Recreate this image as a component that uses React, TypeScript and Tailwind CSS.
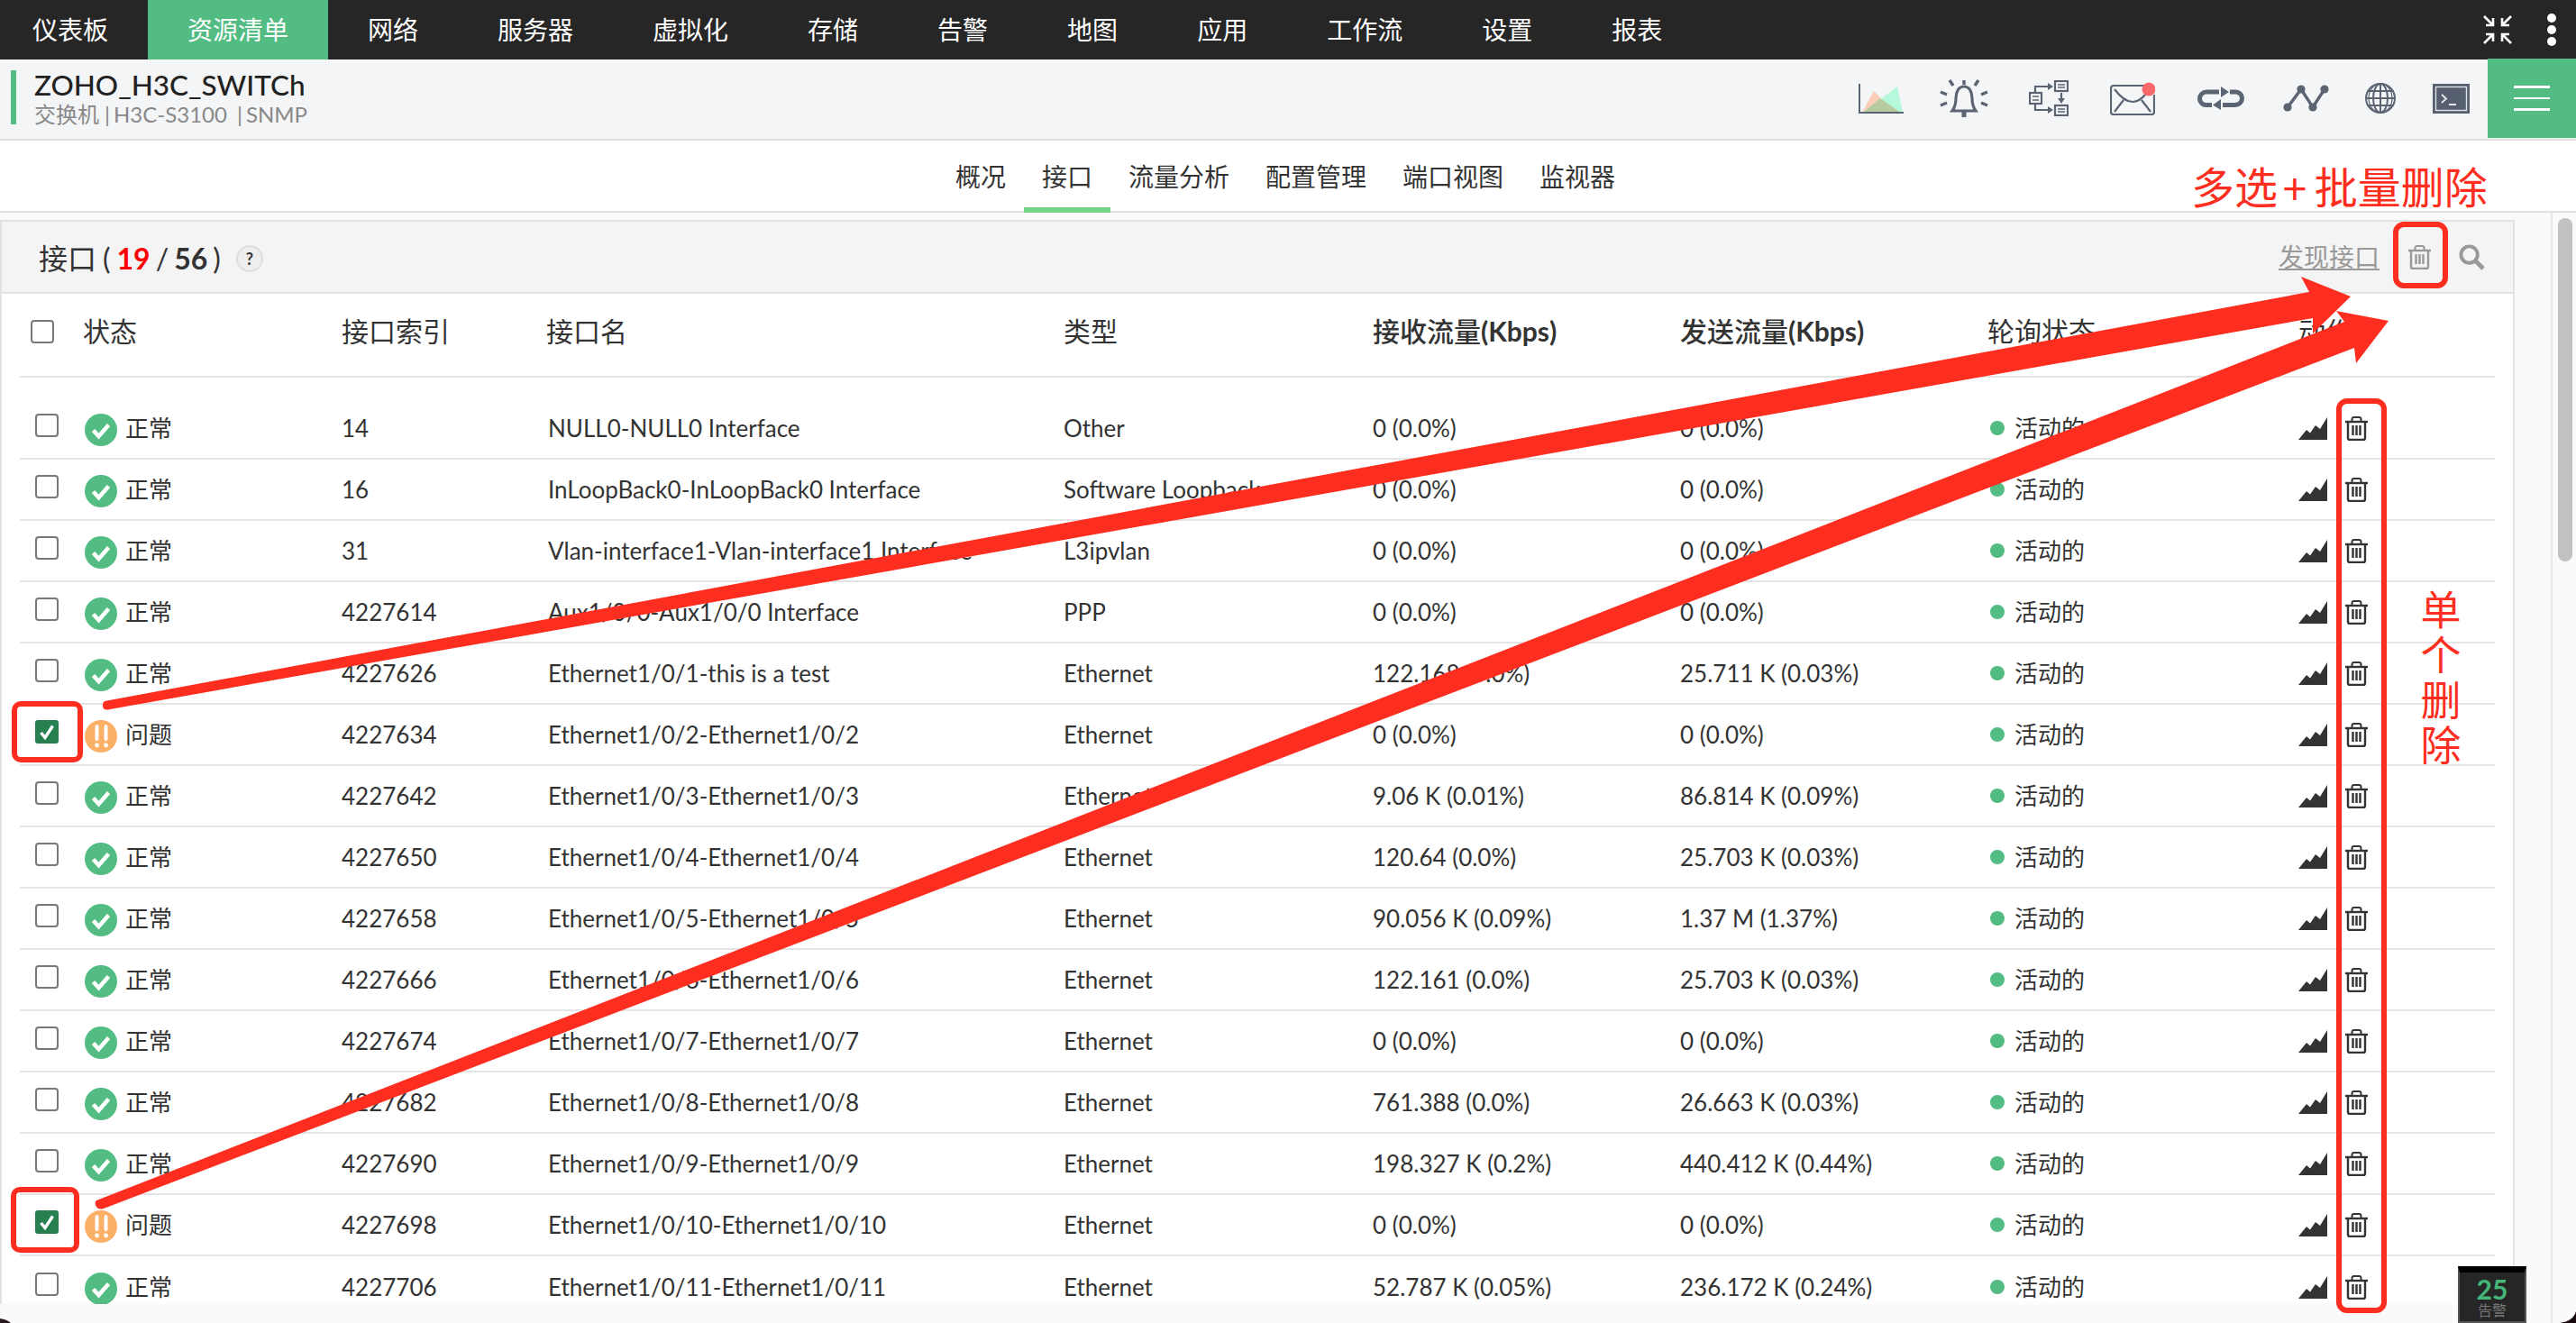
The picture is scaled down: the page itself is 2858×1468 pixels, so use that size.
const navItems = ['仪表板', '资源清单', '网络', '服务器', '虚拟化', '存储', '告警', '地图', '应用', '工作流', '设置', '报表']
const tabs = ['概况', '接口', '流量分析', '配置管理', '端口视图', '监视器']
const columns = 'grid grid-cols-[72px_285px_229px_572px_343px_341px_341px_345px_218px] items-center'

const rows = [
  ['14', 'NULL0-NULL0 Interface', 'Other', '0 (0.0%)', '0 (0.0%)'],
  ['16', 'InLoopBack0-InLoopBack0 Interface', 'Software Loopback', '0 (0.0%)', '0 (0.0%)'],
  ['31', 'Vlan-interface1-Vlan-interface1 Interface', 'L3ipvlan', '0 (0.0%)', '0 (0.0%)'],
  ['4227614', 'Aux1/0/0-Aux1/0/0 Interface', 'PPP', '0 (0.0%)', '0 (0.0%)'],
  ['4227626', 'Ethernet1/0/1-this is a test', 'Ethernet', '122.168 (0.0%)', '25.711 K (0.03%)'],
  ['4227634', 'Ethernet1/0/2-Ethernet1/0/2', 'Ethernet', '0 (0.0%)', '0 (0.0%)', 'bad'],
  ['4227642', 'Ethernet1/0/3-Ethernet1/0/3', 'Ethernet', '9.06 K (0.01%)', '86.814 K (0.09%)'],
  ['4227650', 'Ethernet1/0/4-Ethernet1/0/4', 'Ethernet', '120.64 (0.0%)', '25.703 K (0.03%)'],
  ['4227658', 'Ethernet1/0/5-Ethernet1/0/5', 'Ethernet', '90.056 K (0.09%)', '1.37 M (1.37%)'],
  ['4227666', 'Ethernet1/0/6-Ethernet1/0/6', 'Ethernet', '122.161 (0.0%)', '25.703 K (0.03%)'],
  ['4227674', 'Ethernet1/0/7-Ethernet1/0/7', 'Ethernet', '0 (0.0%)', '0 (0.0%)'],
  ['4227682', 'Ethernet1/0/8-Ethernet1/0/8', 'Ethernet', '761.388 (0.0%)', '26.663 K (0.03%)'],
  ['4227690', 'Ethernet1/0/9-Ethernet1/0/9', 'Ethernet', '198.327 K (0.2%)', '440.412 K (0.44%)'],
  ['4227698', 'Ethernet1/0/10-Ethernet1/0/10', 'Ethernet', '0 (0.0%)', '0 (0.0%)', 'bad'],
  ['4227706', 'Ethernet1/0/11-Ethernet1/0/11', 'Ethernet', '52.787 K (0.05%)', '236.172 K (0.24%)'],
]

function TrashIcon({ color = '#333333', className = '' }: { color?: string; className?: string }) {
  return (
    <svg viewBox="0 0 25 27" fill="none" stroke={color} className={className}>
      <path d="M0 6h25" strokeWidth="2.4" />
      <path d="M7.5 5V3.2A2.2 2.2 0 0 1 9.7 1h5.6a2.2 2.2 0 0 1 2.2 2.2V5" strokeWidth="2" />
      <path d="M3 6v18a2 2 0 0 0 2 2h15a2 2 0 0 0 2-2V6" strokeWidth="2.4" />
      <path d="M8.5 10v11M12.5 10v11M16.5 10v11" strokeWidth="2.4" />
    </svg>
  )
}

function AreaIcon() {
  return (
    <svg viewBox="0 0 32 25" className="h-[25px] w-[32px]" fill="#333333">
      <path d="M0 25 9 14l4 3.5L19 9l5 4L32 0v25Z" />
    </svg>
  )
}

function StatusIcon({ bad }: { bad: boolean }) {
  if (bad) {
    return (
      <svg viewBox="0 0 36 36" className="h-[36px] w-[36px] shrink-0">
        <circle cx="18" cy="18" r="18" fill="#fbb067" />
        <path d="M13.5 7v14M23.5 7v14" stroke="#fff" strokeWidth="4" strokeLinecap="round" />
        <circle cx="13.5" cy="28" r="2.4" fill="#fff" />
        <circle cx="23.5" cy="28" r="2.4" fill="#fff" />
      </svg>
    )
  }
  return (
    <svg viewBox="0 0 36 36" className="h-[36px] w-[36px] shrink-0">
      <circle cx="18" cy="18" r="18" fill="#52bc83" />
      <path d="M9.5 18.5 15.5 25 26.5 12.5" stroke="#fff" strokeWidth="4.6" fill="none" />
    </svg>
  )
}

function Checkbox({ checked = false }: { checked?: boolean }) {
  if (checked) {
    return (
      <span className="flex h-[26px] w-[26px] items-center justify-center rounded-[3px] bg-[#268050]">
        <svg viewBox="0 0 26 26" className="h-[26px] w-[26px]">
          <path d="M6.5 14 11 19.5 19.5 6.5" stroke="#fff" strokeWidth="3.4" fill="none" />
        </svg>
      </span>
    )
  }
  return <span className="block h-[26px] w-[26px] rounded-[4px] border-2 border-[#777777] bg-white" />
}

const iconInk = '#5a6472'

function HeaderIcons() {
  return (
    <div className="ml-auto flex items-center">
      <svg viewBox="0 0 50 33" className="h-[33px] w-[50px]">
        <path d="M4 32 17 8l23 24Z" fill="#fbcdb5" />
        <path d="M4 32 43 3l6 29Z" fill="#b5f8dc" />
        <path d="M5 32 24 16l23 16Z" fill="#b8cba0" />
        <path d="M1 0v32h49" stroke={iconInk} strokeWidth="2" fill="none" />
      </svg>
      <svg viewBox="0 0 54 42" className="ml-[40px] h-[42px] w-[54px]" fill="none" stroke={iconInk} strokeWidth="3.2">
        <path d="M27 1v5M11 1l4 6M43 1l-4 6M1 14l7 3M53 14l-7 3M1 29l7-3M53 29l-7-3" strokeWidth="3.4" />
        <path d="M14 35c3-4 4-7 4-14 0-7 3-13 9-13s9 6 9 13c0 7 1 10 4 14Z" />
        <path d="M27 36v6" strokeWidth="5" />
      </svg>
      <svg viewBox="0 0 44 40" className="ml-[45px] h-[40px] w-[44px]" fill="none" stroke={iconInk} strokeWidth="2.2">
        <rect x="29" y="1" width="14" height="11" />
        <rect x="1" y="14" width="13" height="12" />
        <rect x="29" y="28" width="14" height="11" />
        <path d="M32 5h8M32 8h8M4 18h7M4 22h7M32 32h8M32 35h8" strokeWidth="1.5" />
        <path d="M7 14V7h16M7 26v7h16" />
        <path d="m21 3 6 4-6 4ZM21 29l6 4-6 4Z" fill={iconInk} stroke="none" />
        <path d="M36 14v8" />
        <path d="m32 20 4 6 4-6Z" fill={iconInk} stroke="none" />
      </svg>
      <svg viewBox="0 0 50 37" className="ml-[46px] h-[37px] w-[50px]" fill="none" stroke={iconInk} strokeWidth="2.2">
        <path d="M38 4H4a3 3 0 0 0-3 3v26a3 3 0 0 0 3 3h42a3 3 0 0 0 3-3V14" />
        <path d="M5 8c6 8 13 14 20 14s11-4 15-9M5 33l10-13M45 33 35 20" />
        <circle cx="43" cy="8" r="7.5" fill="#f9686b" stroke="none" />
      </svg>
      <svg viewBox="0 0 56 26" className="ml-[45px] h-[26px] w-[56px]" fill="none" stroke={iconInk} strokeWidth="5">
        <path d="M26 6H12a7.5 7.5 0 0 0-7.5 7.5A7 7 0 0 0 12 20.5h6M30 20.5h14a7.5 7.5 0 0 0 7.5-7.5A7 7 0 0 0 44 6h-6" />
        <path d="m28 0 9 6-9 6ZM28 14l-9 6.5 9 5.5Z" fill={iconInk} stroke="none" />
      </svg>
      <svg viewBox="0 0 51 30" className="ml-[41px] h-[30px] w-[51px]" stroke={iconInk} strokeWidth="3.4" fill={iconInk}>
        <path d="M5 25 20 5l13 20L46 5" fill="none" />
        <circle cx="5" cy="25" r="4.6" stroke="none" />
        <circle cx="20" cy="5" r="4.6" stroke="none" />
        <circle cx="33" cy="25" r="4.6" stroke="none" />
        <circle cx="46" cy="5" r="4.6" stroke="none" />
      </svg>
      <svg viewBox="0 0 34 34" className="ml-[40px] h-[34px] w-[34px]" fill="none" stroke={iconInk} strokeWidth="2">
        <circle cx="17" cy="17" r="16" />
        <ellipse cx="17" cy="17" rx="8" ry="16" />
        <ellipse cx="17" cy="17" rx="13" ry="16" strokeWidth="1.2" />
        <path d="M17 1v32M1 17h32M3 9h28M3 25h28" />
      </svg>
      <svg viewBox="0 0 41 33" className="ml-[41px] h-[33px] w-[41px]">
        <rect x="1" y="1" width="39" height="31" fill="#565f6e" stroke="#565f6e" strokeWidth="2" />
        <rect x="3.5" y="3.5" width="34" height="26" fill="#565f6e" stroke="#dfe2e6" strokeWidth="1.4" />
        <path d="m10 12 5 4.5-5 4.5M18 23h8" fill="none" stroke="#e8eaed" strokeWidth="1.8" />
      </svg>
      <div className="ml-[20px] flex h-[88px] w-[98px] flex-col items-center justify-center gap-[10px] bg-[#52bc83]">
        <span className="h-[2.5px] w-[40px] bg-white" />
        <span className="h-[2.5px] w-[40px] bg-white" />
        <span className="h-[2.5px] w-[40px] bg-white" />
      </div>
    </div>
  )
}

function Annotations() {
  return (
    <>
      <svg viewBox="0 0 2858 1468" className="pointer-events-none absolute left-0 top-0 h-[1468px] w-[2858px]">
        <path
          d="M116 778 2562 324 2553 307 2608 329 2566 370 2566 353 122 787Q114 789 114 783Q114 779 116 778Z"
          fill="#fd2d20"
        />
        <path
          d="M107 1332 2601 357 2592 345 2650 356 2614 403 2612 386 115 1341Q108 1343 106 1337Q105 1334 107 1332Z"
          fill="#fd2d20"
        />
        <path d="M0 1463Q8 1464 12 1468H0Z" fill="#2a1a1e" />
        <path d="M2858 1455Q2855 1466 2840 1468H2858Z" fill="#1a0a10" />
      </svg>
      <div className="pointer-events-none absolute left-[2655px] top-[246px] h-[74px] w-[61px] rounded-[12px] border-[6px] border-[#fd2d20]" />
      <div className="pointer-events-none absolute left-[2592px] top-[442px] h-[1015px] w-[56px] rounded-[12px] border-[6px] border-[#fd2d20]" />
      <div className="pointer-events-none absolute left-[13px] top-[778px] h-[68px] w-[79px] rounded-[10px] border-[6px] border-[#fd2d20]" />
      <div className="pointer-events-none absolute left-[12px] top-[1317px] h-[73px] w-[76px] rounded-[10px] border-[6px] border-[#fd2d20]" />
      <div className="absolute left-[2431px] top-[178px] flex whitespace-nowrap text-[48px] leading-[60px] text-[#fd2d20]">
        <span>多选</span>
        <span className="ml-[5px]">+</span>
        <span className="ml-[8px]">批量删除</span>
      </div>
      <div className="absolute left-[2685px] top-[652px] w-[46px] text-center text-[45px] leading-[50px] text-[#fd2d20]">
        <div>单</div>
        <div>个</div>
        <div>删</div>
        <div>除</div>
      </div>
      <div className="absolute left-[2727px] top-[1405px] flex h-[63px] w-[76px] flex-col items-center border-x-2 border-b-2 border-x-[#555555] border-b-[#555555] border-t-[7px] border-t-black bg-[#262626] pt-[3px]">
        <span className="text-[30px] font-bold leading-[30px] text-[#44b678]">25</span>
        <span className="text-[16px] leading-[18px] text-[#777777]">告警</span>
      </div>
    </>
  )
}

export default function App() {
  return (
    <div className="relative flex h-[1468px] w-[2858px] flex-col overflow-hidden bg-[#fafafa] text-[26px] text-[#333333] [font-family:Lato,'Noto_Sans_CJK_SC',sans-serif]">
      <nav className="flex h-[66px] shrink-0 items-center bg-[#262626] text-[28px] text-white">
        {navItems.map((item, i) => (
          <div
            key={item}
            className={`flex h-full items-center pr-[44px] ${i === 0 ? 'pl-[36px]' : 'pl-[44px]'} ${i === 1 ? 'bg-[#52bc83]' : ''}`}
          >
            {item}
          </div>
        ))}
        <svg viewBox="0 0 32 32" className="ml-auto h-[32px] w-[32px]" fill="none" stroke="#fff" strokeWidth="2.6">
          <path d="M1 1l10 10M11 3v8H3M31 1 21 11M21 3v8h8M1 31l10-10M11 29v-8H3M31 31 21 21M21 29v-8h8" />
        </svg>
        <div className="ml-[39px] mr-[22px] flex flex-col gap-[3px]">
          <span className="h-[10px] w-[10px] rounded-full bg-white" />
          <span className="h-[10px] w-[10px] rounded-full bg-white" />
          <span className="h-[10px] w-[10px] rounded-full bg-white" />
        </div>
      </nav>

      <header className="flex h-[90px] shrink-0 items-center border-b-2 border-[#e0e0e0] bg-[#f4f5f7] pb-[2px]">
        <div className="ml-[12px] h-[60px] w-[6px] -translate-y-px bg-[#52bc83]" />
        <div className="ml-[20px]">
          <div className="text-[31.5px] font-medium leading-[36px] text-[#222222]">ZOHO_H3C_SWITCh</div>
          <div className="flex text-[24px] leading-[30px] text-[#888888]">
            <span>交换机</span>
            <span className="ml-[6px]">|</span>
            <span className="ml-[4px]">H3C-S3100</span>
            <span className="ml-[11px]">|</span>
            <span className="ml-[4px]">SNMP</span>
          </div>
        </div>
        <HeaderIcons />
      </header>

      <div className="flex h-[80px] shrink-0 justify-center border-b-2 border-[#e2e2e2] bg-white pr-[6px] text-[28px]">
        {tabs.map((tab) => (
          <div
            key={tab}
            className={`-mb-[2px] flex items-center border-y-[6px] border-t-transparent px-[20px] ${tab === '接口' ? 'border-b-[#75d587]' : 'border-b-transparent'}`}
          >
            {tab}
          </div>
        ))}
      </div>

      <div className="flex min-h-0 flex-1">
        <div className="w-[2790px] shrink-0 pt-[8px]">
          <section className="h-[1203px] overflow-hidden border-x-2 border-t-2 border-[#e2e2e2] bg-white">
            <div className="flex h-[80px] items-center border-b-2 border-[#e2e2e2] bg-[#f4f4f4] pl-[41px] pr-[31px]">
              <div className="flex translate-y-[2px] items-center text-[32px]">
                <span>接口</span>
                <span className="ml-[7px]">(</span>
                <span className="ml-[7px] font-bold text-[#ff0000]">19</span>
                <span className="ml-[6px]">/</span>
                <span className="ml-[6px] font-bold">56</span>
                <span className="ml-[6px]">)</span>
                <span className="ml-[17px] flex h-[30px] w-[30px] items-center justify-center rounded-full border-2 border-[#dddddd] bg-[#eeeeee] text-[18px] font-bold">?</span>
              </div>
              <div className="ml-auto flex items-center">
                <span className="text-[28px] leading-[32px] text-[#999999] underline">发现接口</span>
                <TrashIcon color="#999999" className="ml-[32px] h-[27px] w-[25px]" />
                <svg viewBox="0 0 30 30" className="ml-[31px] h-[29px] w-[29px]" fill="none" stroke="#999999">
                  <circle cx="12" cy="12" r="9.5" strokeWidth="4" />
                  <path d="m19 19 9 9" strokeWidth="5" />
                </svg>
              </div>
            </div>

            <div className="mx-[20px]">
              <div className={`${columns} h-[93px] border-b-2 border-[#e4e4e4] pb-[8px] text-[30px]`}>
                <div className="pl-[12px]"><Checkbox /></div>
                <div className="-ml-[2px]">状态</div>
                <div>接口索引</div>
                <div className="-ml-[2px]">接口名</div>
                <div>类型</div>
                <div><span className="font-medium">接收流量</span><span className="font-bold">(Kbps)</span></div>
                <div><span className="font-medium">发送流量</span><span className="font-bold">(Kbps)</span></div>
                <div>轮询状态</div>
                <div>动作</div>
              </div>
              <div className="h-[23px]" />
              {rows.map((row, i) => {
                const bad = row[5] === 'bad'
                return (
                  <div key={row[0]} className={`${columns} h-[68px] ${i < rows.length - 1 ? 'border-b-2 border-[#e4e4e4]' : ''}`}>
                    <div className="-mt-[6px] pl-[17px]"><Checkbox checked={bad} /></div>
                    <div className="flex items-center gap-[9px]">
                      <div className="translate-y-[2px]"><StatusIcon bad={bad} /></div>
                      <span>{bad ? '问题' : '正常'}</span>
                    </div>
                    <div>{row[0]}</div>
                    <div className="whitespace-nowrap">{row[1]}</div>
                    <div className="whitespace-nowrap">{row[2]}</div>
                    <div className="whitespace-nowrap">{row[3]}</div>
                    <div className="whitespace-nowrap">{row[4]}</div>
                    <div className="flex items-center gap-[11px] pl-[3px]">
                      <span className="h-[16px] w-[16px] rounded-full bg-[#52bc83]" />
                      <span>活动的</span>
                    </div>
                    <div className="flex items-center gap-[20px]">
                      <AreaIcon />
                      <TrashIcon className="h-[27px] w-[25px]" />
                    </div>
                  </div>
                )
              })}
            </div>
          </section>
        </div>
        <div className="ml-[40px] flex w-[28px] shrink-0 border-l-2 border-[#e8e8e8] pl-[6px] pt-[6px]">
          <div className="h-[381px] w-[16px] rounded-full bg-[#c1c1c1]" />
        </div>
      </div>

      <Annotations />
    </div>
  )
}
